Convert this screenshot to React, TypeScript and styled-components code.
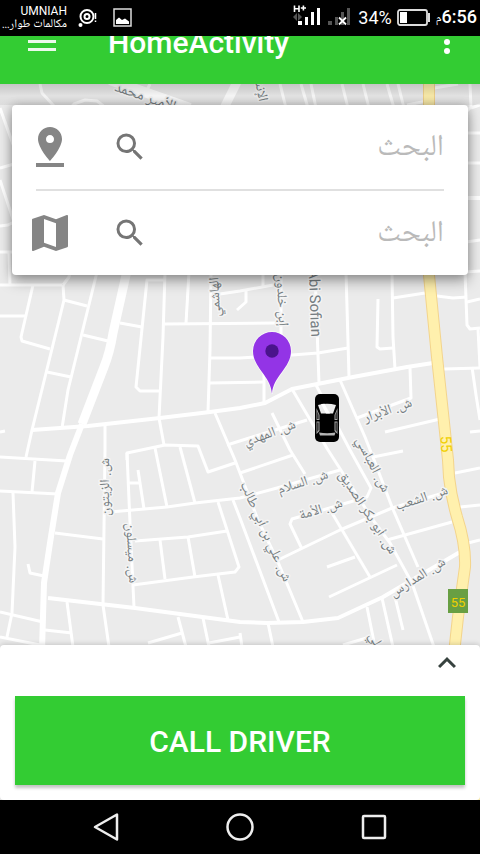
import React from "react";
import styled, { createGlobalStyle } from "styled-components";
import { MdKeyboardArrowUp, MdMap, MdPinDrop, MdSearch } from "react-icons/md";

const GREEN = "#33cc33";
const ARABIC = '"Noto Naskh Arabic UI", "Noto Naskh Arabic", "Noto Sans Arabic", "DejaVu Sans", sans-serif';

const GlobalStyle = createGlobalStyle`
  * { box-sizing: border-box; }
  html, body, #root { height: 100%; }
  body { margin: 0; background: #000; font-family: Roboto, "DejaVu Sans", sans-serif; }
  button { border: 0; padding: 0; background: none; color: inherit; font: inherit; cursor: pointer; }
`;

const Screen = styled.div`
  display: flex;
  flex-direction: column;
  min-height: 100vh;
`;

const StatusBar = styled.div`
  display: flex;
  align-items: center;
  justify-content: space-between;
  height: 36px;
  flex: none;
  padding: 0 3px;
  background: #000;
  color: #fff;
`;

const StatusGroup = styled.div<{ $gap: number }>`
  display: flex;
  align-items: center;
  gap: ${(p) => p.$gap}px;
`;

const Carrier = styled.div`
  display: flex;
  flex-direction: column;
  align-items: flex-end;
  width: 64px;
  font-size: 12px;
  line-height: 13px;
`;

const CarrierNote = styled.span`
  font-family: ${ARABIC};
  font-size: 12px;
  white-space: nowrap;
`;

const Percent = styled.span`
  font-size: 18px;
  line-height: 36px;
`;

const Clock = styled.time`
  display: flex;
  align-items: baseline;
  font-size: 18px;
  font-weight: 500;
  line-height: 36px;
`;

const Meridiem = styled.span`
  font-family: ${ARABIC};
  font-size: 12px;
  font-weight: 400;
`;

const AppBar = styled.header`
  display: flex;
  align-items: flex-end;
  height: 48px;
  flex: none;
  overflow: hidden;
  background: ${GREEN};
  color: #fff;
`;

const AppBarRow = styled.div`
  display: flex;
  flex: 1;
  align-items: center;
  height: 84px;
  padding: 0 21px 0 28px;
`;

const Title = styled.h1`
  flex: 1;
  margin: 2px 0 0 52px;
  font-size: 30px;
  font-weight: 500;
  line-height: 36px;
`;

const IconButton = styled.button`
  display: flex;
  align-items: center;
  justify-content: center;
`;

const Main = styled.main`
  position: relative;
  display: flex;
  flex: 1;
  flex-direction: column;
  justify-content: space-between;
  overflow: hidden;
  background: #ebebeb;
`;

const MapCanvas = styled.svg`
  position: absolute;
  inset: 0;
  width: 100%;
  height: 100%;
`;

const AppBarShade = styled.div`
  position: relative;
  height: 21px;
  background: linear-gradient(rgba(0, 0, 0, 0.16), rgba(0, 0, 0, 0.04) 12px, rgba(0, 0, 0, 0.06));
`;

const StreetLabel = styled.text<{ $size?: number }>`
  font-family: Roboto, ${ARABIC};
  font-size: ${(p) => p.$size ?? 14}px;
  fill: #757d81;
  stroke: #f4f4f4;
  stroke-width: 3px;
  stroke-linejoin: round;
  paint-order: stroke;
  text-anchor: middle;
  dominant-baseline: central;
`;

const RouteNumber = styled.text<{ $size: number }>`
  font-family: Roboto, sans-serif;
  font-size: ${(p) => p.$size}px;
  fill: #f0cf00;
  text-anchor: middle;
  dominant-baseline: central;
`;

const SearchCard = styled.form`
  position: relative;
  display: flex;
  flex-direction: column;
  margin: 0 12px;
  border-radius: 4px;
  background: #fff;
  box-shadow: 0 6px 14px rgba(0, 0, 0, 0.34), 0 0 10px rgba(0, 0, 0, 0.2);
`;

const SearchRow = styled.label`
  display: flex;
  align-items: center;
  height: 84px;
  padding: 0 24px 0 14px;
  color: #858585;
`;

const SearchGlyph = styled.span`
  display: flex;
  margin-left: 38px;
  color: #757575;
`;

const SearchInput = styled.input`
  flex: 1;
  min-width: 0;
  height: 60px;
  padding: 0;
  border: 0;
  outline: 0;
  background: transparent;
  color: #333;
  font-family: ${ARABIC};
  font-size: 30px;
  &::placeholder { color: #bababa; opacity: 1; }
`;

const Divider = styled.hr`
  width: auto;
  height: 2px;
  margin: 0 24px;
  border: 0;
  background: #e0e0e0;
`;

const Sheet = styled.section`
  position: relative;
  display: flex;
  flex-direction: column;
  padding: 0 15px 15px;
  border-radius: 4px;
  background: #fff;
  box-shadow: 0 -1px 5px rgba(0, 0, 0, 0.16);
`;

const ExpandButton = styled(IconButton)`
  align-self: flex-end;
  height: 36px;
  margin-bottom: 15px;
  color: #37423f;
`;

const CallButton = styled.button`
  height: 89px;
  padding-top: 2px;
  background: ${GREEN};
  color: #fff;
  font-size: 30px;
  font-weight: 500;
  box-shadow: 0 3px 3px rgba(0, 0, 0, 0.24);
`;

const NavBar = styled.nav`
  display: flex;
  align-items: center;
  justify-content: center;
  gap: 106px;
  height: 54px;
  flex: none;
  background: #000;
`;

const MINOR_ROADS = [
  "40,84 42,93 53,105 66,122", "66,114 74,104 85,100 97,101 106,108", "147,90 150,84",
  "0,108 14,147", "0,168 14,164", "0,180 14,222 8,225 0,226", "0,252 14,252", "9,252 10,285",
  "280,84 286,108", "301,84 308,108", "311,84 316,108", "342,84 348,108", "363,84 369,108", "387,84 394,108", "398,84 404,108",
  "407,105 427,101", "434,88 458,84", "470,84 471,107 466,112", "471,108 480,105",
  "466,133 480,133", "466,163 480,163", "466,242 480,240", "465,272 480,271",
  "0,285 62,285", "71,265 69,277 63,285", "63,285 64,300 32,430 26,457", "33,285 21,337 22,341 50,349",
  "0,316 25,316", "64,300 87,306", "97,272 68,390 62,428", "83,335 108,341", "47,372 71,377",
  "0,432 5,431", "0,457 67,461", "120,323 142,327", "165,280 147,280 136,387 140,391 159,391",
  "165,272 163,337 159,418 164,445", "189,272 186,323", "164,324 275,323", "211,272 210,350 208,412",
  "210,358 240,358 292,355 318,353 348,348", "209,383 264,382", "213,295 240,291 273,285",
  "237,310 246,302 246,290", "263,272 263,286", "264,360 264,403", "281,272 281,335",
  "315,272 319,383", "346,272 349,377", "378,299 377,347 380,349 393,348", "392,272 393,337 395,369",
  "393,298 425,293", "437,296 453,298 467,297", "465,272 467,325 470,329 480,328", "467,302 480,299",
  "444,369 480,368", "472,367 476,395 480,420", "478,329 480,367", "470,432 480,431",
  "410,368 411,398 357,418", "385,432 440,419", "373,457 403,451",
  "292,389 328,450 373,520 390,543 412,583 434,647", "316,385 350,450 371,488 367,497 292,519 290,524 302,549",
  "340,380 365,437 376,465 392,507 418,567", "307,420 227,445", "272,413 290,450 305,474", "240,473 293,455",
  "215,413 235,460 258,520 278,562 303,622", "110,512 167,507 195,503 240,498 277,488 340,470",
  "127,460 127,453 165,445 198,446 208,472 235,463", "127,453 130,523 134,607", "138,470 144,509", "128,483 139,483",
  "155,448 167,507", "180,447 195,503", "105,426 105,450 103,605 109,647", "55,533 103,539",
  "135,541 188,537 227,531", "218,502 239,567 235,572 193,577 133,585", "160,540 165,579", "188,537 195,577",
  "218,575 228,620", "233,500 240,518 279,622", "178,617 186,647", "148,643 182,633", "203,618 209,647",
  "209,643 240,637", "67,602 73,647", "45,630 72,633", "0,612 43,622", "0,637 45,646",
  "13,493 15,547 12,613 7,637", "0,491 58,494", "35,461 32,492", "28,564 30,573 44,576",
  "278,560 340,530 392,508 447,492", "332,513 370,577", "327,567 355,557", "329,597 397,565", "387,540 452,522",
  "455,473 480,468", "460,507 480,505", "468,543 480,540", "367,607 375,647", "382,598 393,647",
  "395,597 403,630", "343,645 370,637", "268,623 273,647", "240,633 242,647",
];

const MEDIUM_ROADS = [
  "32,430 88,426 160,418 210,412 240,408 265,403 292,389 353,377 407,367 433,363",
  "48,598 135,608 240,622 267,623 303,622 338,618 383,597 412,580 460,552",
  "466,198 480,198",
];

const HIGHWAY = "M429 84 L429 275 L437 357 L448 460 L449 477 Q451 496 457 517 Q466 545 465 567 L458 617 L450 690 L480 800";

type Label = { text: string; x: number; y: number; turn: number; size?: number };

const LABELS: Label[] = [
  { text: "الأمير محمد", x: 145, y: 98, turn: 19, size: 15 },
  { text: "الإنشاء", x: 259, y: 85, turn: 79 },
  { text: "الهاشمي", x: 216, y: 297, turn: -93 },
  { text: "إبن خلدون", x: 281, y: 300, turn: 87 },
  { text: "Abi Sofian", x: 315, y: 303, turn: 88, size: 15 },
  { text: "ش. المهدي", x: 270, y: 434, turn: -20 },
  { text: "ش. الأبرار", x: 388, y: 411, turn: -19 },
  { text: "ش. العباسي", x: 372, y: 465, turn: 63 },
  { text: "ش. السلام", x: 303, y: 483, turn: -18 },
  { text: "ش. أبو بكر الصديق", x: 367, y: 513, turn: 57 },
  { text: "ش. الأمة", x: 321, y: 510, turn: -17 },
  { text: "ش. الشعب", x: 422, y: 499, turn: -18 },
  { text: "ش. علي بن أبي طالب", x: 265, y: 532, turn: 66 },
  { text: "ش. المدارس", x: 418, y: 578, turn: -32 },
  { text: "ش. الزيتون", x: 106, y: 487, turn: -90 },
  { text: "ش. ميسلون", x: 131, y: 553, turn: 87 },
  { text: "ش. علي", x: 381, y: 652, turn: 62 },
];

function CityMap() {
  return (
    <MapCanvas viewBox="0 84 480 716" preserveAspectRatio="xMidYMin slice" role="img" aria-label="Map">
      <rect x="0" y="84" width="480" height="716" fill="#ebebeb" />
      <g fill="none" stroke="#fff" strokeLinejoin="round">
        <g strokeWidth="3">
          {MINOR_ROADS.map((points) => <polyline key={points} points={points} />)}
        </g>
        <g strokeWidth="4">
          {MEDIUM_ROADS.map((points) => <polyline key={points} points={points} />)}
        </g>
        <path d="M110 80 L190 108" strokeWidth="10" />
        <path d="M240 76 L224 108 L150 200 L126 275 L113 333 Q110 352 104 367 L82 424" strokeWidth="9" />
        <path d="M82 424 L70 455 L58 493 L50 543 L44 583 L42 650" strokeWidth="6" />
      </g>
      <path d={HIGHWAY} fill="none" stroke="#f3d48c" strokeWidth="12" />
      <path d={HIGHWAY} fill="none" stroke="#fff0ad" strokeWidth="10" />
      {LABELS.map((l) => (
        <StreetLabel key={l.text} $size={l.size} transform={`translate(${l.x} ${l.y}) rotate(${l.turn})`}>
          {l.text}
        </StreetLabel>
      ))}
      <RouteNumber $size={15} transform="translate(446 444) rotate(86)">55</RouteNumber>
      <rect x="448" y="589" width="20" height="24" fill="#689f43" />
      <RouteNumber $size={13} x="458" y="602">55</RouteNumber>

      <path d="M272 394 C271 376 253 368 253 351 a19 19 0 0 1 38 0 C291 368 273 376 272 394z" fill="#9334e6" stroke="#fff" strokeOpacity="0.7" strokeWidth="1.500" paintOrder="stroke" />
      <circle cx="272" cy="351" r="6.700" fill="#4a148c" />

      <rect x="315" y="394" width="24" height="48" rx="5" fill="#000" />
      <path d="M318 405 Q327 402.500 336 405 L333 413.500 H321z" fill="#ececec" />
      <path d="M321 404 L326 413.500 H330 L324.500 403.700z" fill="#fff" />
      <g fill="#a8a8a8">
        <path d="M316.500 408 L319.500 415 V420 H316.500z M337.500 408 L334.500 415 V420 H337.500z" />
        <path d="M316.500 421.500 H319.500 V431 L316.500 434z M337.500 421.500 H334.500 V431 L337.500 434z" />
      </g>
      <g fill="#111">
        <path d="M317.300 411 L318.500 415 V419 H317.300z M336.700 411 L335.500 415 V419 H336.700z" />
        <path d="M317.300 422.500 H318.500 V430 L317.300 432z M336.700 422.500 H335.500 V430 L336.700 432z" />
      </g>
      <path d="M319 432.500 Q327 434 335.500 432.500 L334.500 435.500 H320z" fill="#b5b5b5" />
    </MapCanvas>
  );
}

function SearchField({ name, label, icon }: { name: string; label: string; icon: React.ReactNode }) {
  return (
    <SearchRow>
      {icon}
      <SearchGlyph><MdSearch size={36} /></SearchGlyph>
      <SearchInput name={name} aria-label={label} placeholder="البحث" dir="rtl" />
    </SearchRow>
  );
}

function StatusIcons() {
  return (
    <svg width="60" height="26" viewBox="0 0 60 26" aria-hidden="true">
      <g fill="none" stroke="#fff" strokeWidth="1.600">
        <path d="M1.500 0.500 V7 M6 0.500 V7 M1.500 3.800 H6" />
        <path d="M7.800 3 H13 M10.400 0.500 V5.500" />
      </g>
      <path d="M4 8 L0 12 L4 16z M5 8 L9 12 L5 16z" fill="#555" />
      <path d="M5 16 h4 v4 h-4z M12 12 h3 v8 h-3z M18 7 h3 v13 h-3z M24 3 h3 v17 h-3z" fill="#fff" />
      <path d="M35 16 h4 v4 h-4z M42 12 h3 v8 h-3z M48 7 h3 v13 h-3z M54 3 h3 v17 h-3z" fill="#555" />
      <path d="M46 12.500 L53 19.500 M53 12.500 L46 19.500" stroke="#fff" strokeWidth="1.800" />
    </svg>
  );
}

export default function App() {
  return (
    <Screen>
      <GlobalStyle />
      <StatusBar>
        <StatusGroup $gap={11}>
          <Carrier>
            <span>UMNIAH</span>
            <CarrierNote dir="rtl">مكالمات طوار...</CarrierNote>
          </Carrier>
          <svg width="20" height="20" viewBox="0 0 20 20" aria-hidden="true">
            <g fill="none" stroke="#fff">
              <circle cx="9" cy="8.500" r="6.500" strokeWidth="2" />
              <circle cx="9" cy="8.500" r="2.500" strokeWidth="2" />
              <path d="M17.500 5 V11 M17.500 12.500 V14" strokeWidth="1.500" />
            </g>
            <circle cx="2.500" cy="17" r="2" fill="#fff" />
          </svg>
          <svg width="28" height="20" viewBox="0 0 28 20" aria-hidden="true">
            <rect x="5" y="1" width="17" height="17" fill="none" stroke="#ddd" strokeWidth="1.500" />
            <path d="M7 16 V12 L10 9.500 L13 12 L16 10.500 L20 13.500 V16z" fill="#fff" />
          </svg>
        </StatusGroup>
        <StatusGroup $gap={5}>
          <StatusIcons />
          <Percent>34%</Percent>
          <svg width="34" height="18" viewBox="0 0 34 18" aria-hidden="true">
            <rect x="1" y="1" width="29" height="15" rx="2" fill="none" stroke="#ddd" strokeWidth="1.800" />
            <rect x="3" y="3" width="7" height="11" fill="#fff" />
            <path d="M32 4 V13" stroke="#ddd" strokeWidth="2" />
          </svg>
          <Clock><Meridiem>م</Meridiem><span>6:56</span></Clock>
        </StatusGroup>
      </StatusBar>

      <AppBar>
        <AppBarRow>
          <IconButton aria-label="Menu">
            <svg width="28" height="24" viewBox="0 0 28 24">
              <path d="M0 3 H28 M0 11.500 H28 M0 19.500 H28" stroke="#fff" strokeOpacity="0.900" strokeWidth="3" />
            </svg>
          </IconButton>
          <Title>HomeActivity</Title>
          <IconButton aria-label="More options">
            <svg width="24" height="26" viewBox="0 0 24 26">
              <g fill="#fff">
                <circle cx="12" cy="4" r="3" />
                <circle cx="12" cy="13" r="3" />
                <circle cx="12" cy="22" r="3" />
              </g>
            </svg>
          </IconButton>
        </AppBarRow>
      </AppBar>

      <Main>
        <CityMap />
        <div>
          <AppBarShade />
          <SearchCard>
            <SearchField name="pickup" label="Pickup" icon={<MdPinDrop size={48} />} />
            <Divider />
            <SearchField name="destination" label="Destination" icon={<MdMap size={48} />} />
          </SearchCard>
        </div>
        <Sheet>
          <ExpandButton aria-label="Expand"><MdKeyboardArrowUp size={36} /></ExpandButton>
          <CallButton>CALL DRIVER</CallButton>
        </Sheet>
      </Main>

      <NavBar>
        <IconButton aria-label="Back">
          <svg width="28" height="30" viewBox="0 0 28 30">
            <path d="M25 2.500 V27.500 L3 15z" fill="none" stroke="#eee" strokeWidth="2.500" strokeLinejoin="round" />
          </svg>
        </IconButton>
        <IconButton aria-label="Home">
          <svg width="28" height="30" viewBox="0 0 28 30">
            <circle cx="14" cy="15" r="12.500" fill="none" stroke="#eee" strokeWidth="2.500" />
          </svg>
        </IconButton>
        <IconButton aria-label="Recent apps">
          <svg width="28" height="30" viewBox="0 0 28 30">
            <rect x="3" y="4" width="22" height="22" rx="1" fill="none" stroke="#eee" strokeWidth="2.500" />
          </svg>
        </IconButton>
      </NavBar>
    </Screen>
  );
}
